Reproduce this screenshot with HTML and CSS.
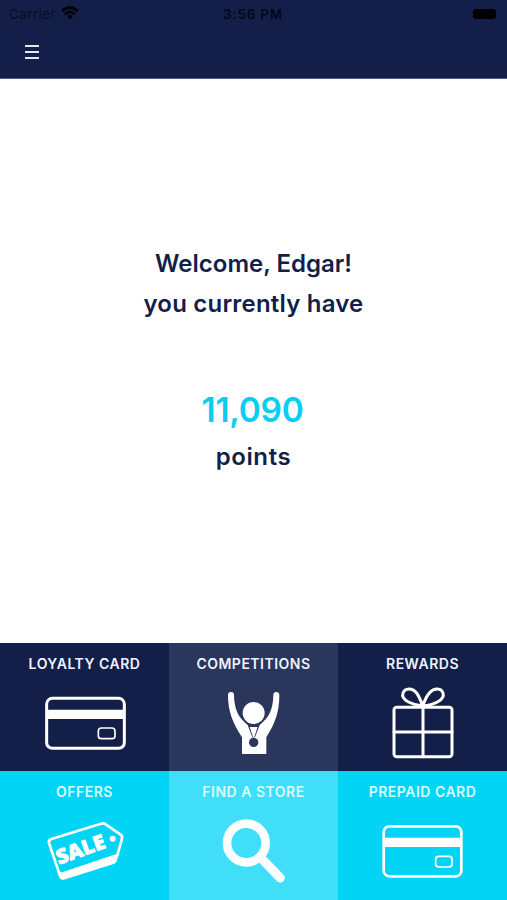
FILE: index.html
```
<!DOCTYPE html>
<html lang="en">
<head>
	<title>Loyalty</title>
	<meta charset="utf-8">
	<link rel="stylesheet" href="styles.css">
</head>
<body>
	<div class="container">
		<header class="top_bar">
			<div class="status_bar">
				<div class="carrier">
					<span class="carrier_name">Carrier</span>
					<svg class="wifi" viewBox="0 0 18 14">
						<path d="M1.2 5.2Q9-2.2 16.8 5.2M4 8.2Q9 3.6 14 8.2"/>
						<path class="wifi_dot" d="M6 10.3Q9 7.7 12 10.3L9 13.4z"/>
					</svg>
				</div>
				<span class="clock">3:56 PM</span>
				<div class="battery"></div>
			</div>
			<div class="menu_btn">
				<span></span>
				<span></span>
				<span></span>
			</div>
		</header>
		<main class="welcome">
			<p class="welcome_name">Welcome, Edgar!</p>
			<p class="welcome_have">you currently have</p>
			<p class="points">11,090</p>
			<p class="points_label">points</p>
		</main>
		<nav class="tiles">
			<a class="tile">
				<span class="tile_name">LOYALTY CARD</span>
				<svg class="icon" viewBox="0 132 507 276">
					<rect x="140" y="190" width="233" height="150" rx="17" stroke-width="9"/>
					<path class="fill" d="M140 224h233v28H140z"/>
					<rect x="295" y="279" width="50" height="32" rx="9" stroke-width="5"/>
				</svg>
			</a>
			<a class="tile light">
				<span class="tile_name">COMPETITIONS</span>
				<svg class="icon" viewBox="4 132 507 276">
					<circle class="fill" cx="258" cy="234" r="33"/>
					<path class="fill" d="M181 180Q181 171 190 171Q199 171 199 181C200 222 211 248 240 270L254 307H262L276 270C305 248 316 222 317 181Q317 171 326 171Q335 171 335 181C335 231 322 265 296 307V357H223V307C195 263 181 229 181 180z"/>
					<path class="fill" d="M246 276H270L260 306H256z"/>
					<circle class="medal" cx="258" cy="322" r="14"/>
				</svg>
			</a>
			<a class="tile">
				<span class="tile_name">REWARDS</span>
				<svg class="icon" viewBox="3 132 507 276">
					<g stroke-width="9">
						<rect x="171" y="217" width="174" height="148" rx="8"/>
						<path d="M258 214V365M171 291H345"/>
						<path d="M257 213C230 210 190 197 198 174C204 158 226 158 237 172C247 184 252 199 257 213C262 199 267 184 279 172C291 158 313 158 318 174C325 197 287 210 257 213z"/>
					</g>
				</svg>
			</a>
			<a class="tile cyan">
				<span class="tile_name">OFFERS</span>
				<svg class="icon" viewBox="0 118 507 276">
					<path stroke-width="8" d="M154 214L303 168Q311 165 317 170L361 200Q368 205 366 213L352 263L188 318Q179 320 176 312L147 226Q145 217 154 214z"/>
					<path class="fill" d="M172 312L188 314L357 257L350 281Q348 287 341 289L191 336Q182 338 178 330z"/>
					<circle class="fill" cx="338" cy="213" r="9"/>
					<text class="sale" transform="translate(177 291) rotate(-19.5)" textLength="152" lengthAdjust="spacingAndGlyphs">SALE</text>
				</svg>
			</a>
			<a class="tile cyan light">
				<span class="tile_name">FIND A STORE</span>
				<svg class="icon" viewBox="4 118 507 276">
					<circle cx="236" cy="226" r="58" stroke-width="26"/>
					<path stroke-width="27" d="M281 272L338 331"/>
				</svg>
			</a>
			<a class="tile cyan">
				<span class="tile_name">PREPAID CARD</span>
				<svg class="icon" viewBox="3 118 507 276">
					<rect x="140" y="176" width="233" height="150" rx="17" stroke-width="8"/>
					<path class="fill" d="M140 210h233v28H140z"/>
					<rect x="296" y="266" width="49" height="32" rx="9" stroke-width="5"/>
				</svg>
			</a>
		</nav>
	</div>
</body>
</html>
```
FILE: styles.css
```
*{
	box-sizing:border-box;
	margin:0;
	padding:0;
}
body{
	font-family:Inter, "Liberation Sans", sans-serif;
	background:white;
}
.container{
	height:900px;
	display:flex;
	flex-direction:column;
}
.top_bar{
	height:79px;
	background:#131f49;
	border-bottom:1px solid #4a5d7c;
}
.status_bar{
	height:28px;
	padding:0 10px 0 9px;
	display:grid;
	grid-template-columns:1fr auto 1fr;
	align-items:center;
	font-size:13px;
	line-height:28px;
	color:#02071a;
}
.carrier{
	display:flex;
	align-items:center;
	gap:5px;
}
.carrier_name{
	font-size:13.5px;
	letter-spacing:0.4px;
	color:#050d26;
}
.wifi{
	width:18px;
	height:14px;
	margin-top:-2px;
	fill:none;
	stroke:#000208;
	stroke-width:2.7;
}
.wifi_dot{
	fill:#000208;
	stroke:none;
}
.clock{
	font-size:13.5px;
	font-weight:600;
	letter-spacing:0.8px;
}
.battery{
	width:23px;
	height:10px;
	margin-right:1px;
	background:black;
	border-radius:3px;
	justify-self:end;
}
.menu_btn{
	width:14px;
	margin:17px 0 0 25px;
	display:flex;
	flex-direction:column;
	gap:4px;
}
.menu_btn span{
	height:2px;
	background:#e3e8f5;
}
.welcome{
	flex:1;
	padding-top:165px;
	text-align:center;
	color:#131f49;
	font-size:24px;
	font-weight:600;
	line-height:40px;
}
.welcome_have{
	letter-spacing:0.2px;
}
.points{
	margin-top:64px;
	padding-right:2px;
	font-size:33.5px;
	line-height:44px;
	letter-spacing:-0.3px;
	color:#0bcdf0;
}
.points_label{
	margin-top:5px;
	letter-spacing:0.6px;
}
.tiles{
	height:257px;
	display:grid;
	grid-template-columns:repeat(3, 1fr);
	grid-template-rows:128px 129px;
}
.tile{
	padding-top:11px;
	display:flex;
	flex-direction:column;
	align-items:center;
	background:#131f49;
	color:white;
}
.tile.light{
	background:#2b365c;
}
.tile.cyan{
	background:#02d4f6;
}
.tile.cyan.light{
	background:#40def9;
}
.tile_name{
	height:25px;
	font-size:14px;
	font-weight:600;
	line-height:20px;
	letter-spacing:0.5px;
	color:#edf3ff;
}
.cyan .tile_name{
	color:#d9fbff;
}
.icon{
	width:169px;
	height:92px;
	fill:none;
	stroke:white;
	stroke-linecap:round;
	stroke-linejoin:round;
}
.icon .fill{
	fill:white;
	stroke:none;
}
.icon .medal{
	fill:#2b365c;
	stroke:none;
}
.sale{
	font-family:"Open Sans", sans-serif;
	font-size:62px;
	font-weight:800;
	fill:white;
	stroke:white;
	stroke-width:2;
}
```
